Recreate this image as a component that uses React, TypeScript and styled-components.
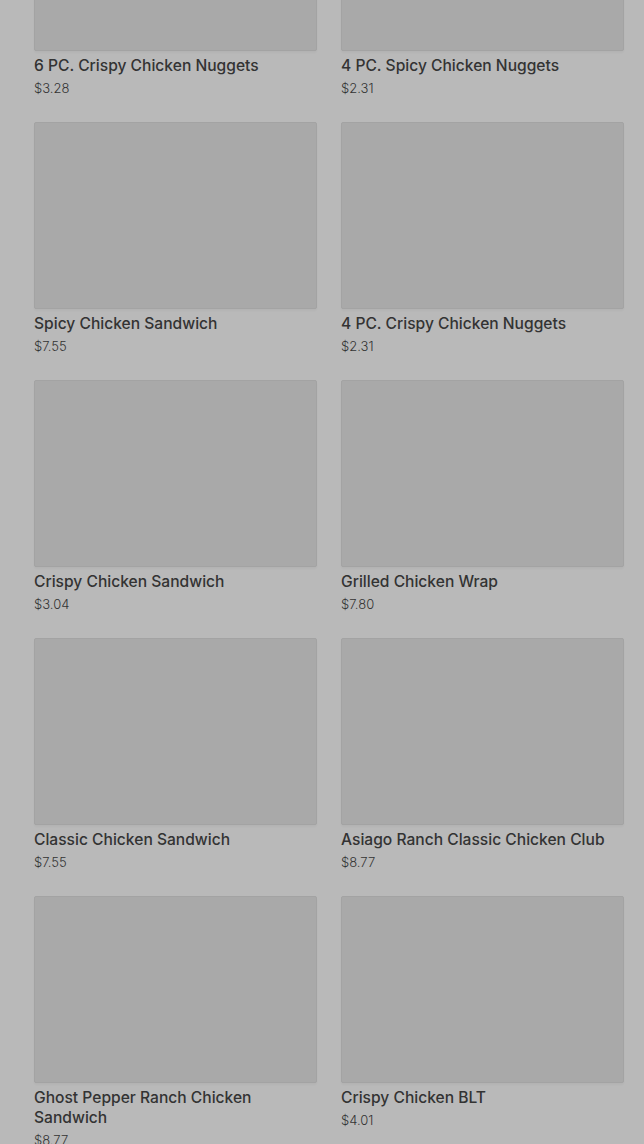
import styled, { createGlobalStyle } from 'styled-components'

const GlobalStyle = createGlobalStyle`
  html, body {
    margin: 0;
    padding: 0;
    background: #b9b9b9;
    overflow: hidden;
  }
  body {
    font-family: Inter, Roboto, "Liberation Sans", sans-serif;
  }
`

interface IMenuItem {
  name: string
  price: string
}

const items: IMenuItem[] = [
  {name: '6 PC. Crispy Chicken Nuggets', price: '$3.28'},
  {name: '4 PC. Spicy Chicken Nuggets', price: '$2.31'},
  {name: 'Spicy Chicken Sandwich', price: '$7.55'},
  {name: '4 PC. Crispy Chicken Nuggets', price: '$2.31'},
  {name: 'Crispy Chicken Sandwich', price: '$3.04'},
  {name: 'Grilled Chicken Wrap', price: '$7.80'},
  {name: 'Classic Chicken Sandwich', price: '$7.55'},
  {name: 'Asiago Ranch Classic Chicken Club', price: '$8.77'},
  {name: 'Ghost Pepper Ranch Chicken Sandwich', price: '$8.77'},
  {name: 'Crispy Chicken BLT', price: '$4.01'},
]

/**
 * Menu card with image placeholder, name and price
 */
function MenuCard(props: IMenuItem): JSX.Element {
  const {name, price} = props
  return (
    <Card>
      <Thumb />
      <Name>{name}</Name>
      <Price>{price}</Price>
    </Card>
  )
}

export default function App(): JSX.Element {
  return (
    <>
      <GlobalStyle />
      <Page>
        <Grid>
          {items.map((item) => (
            <MenuCard key={item.name} {...item} />
          ))}
        </Grid>
      </Page>
    </>
  )
}

// styles
const Page = styled.div`
  width: 644px;
  height: 1144px;
  overflow: hidden;
  padding: 0 20px 0 34px;
  box-sizing: border-box;
`

// list is scrolled, first row partly above the fold
const Grid = styled.div`
  display: grid;
  grid-template-columns: 283px 283px;
  column-gap: 24px;
  row-gap: 26px;
  margin-top: -136px;
`

const Card = styled.div`
  display: flex;
  flex-direction: column;
`

const Thumb = styled.div`
  height: 187px;
  box-sizing: border-box;
  background: #a9a9a9;
  border: 1px solid #a3a3a3;
  border-radius: 2px;
  box-shadow: 0 2px 2px rgba(0, 0, 0, 0.03);
`

const Name = styled.div`
  margin-top: 5px;
  font-size: 15.6px;
  line-height: 20px;
  font-weight: 500;
  color: #333333;
`

const Price = styled.div`
  margin-top: 4px;
  font-size: 13px;
  line-height: 16px;
  font-weight: 300;
  color: #333333;
`
